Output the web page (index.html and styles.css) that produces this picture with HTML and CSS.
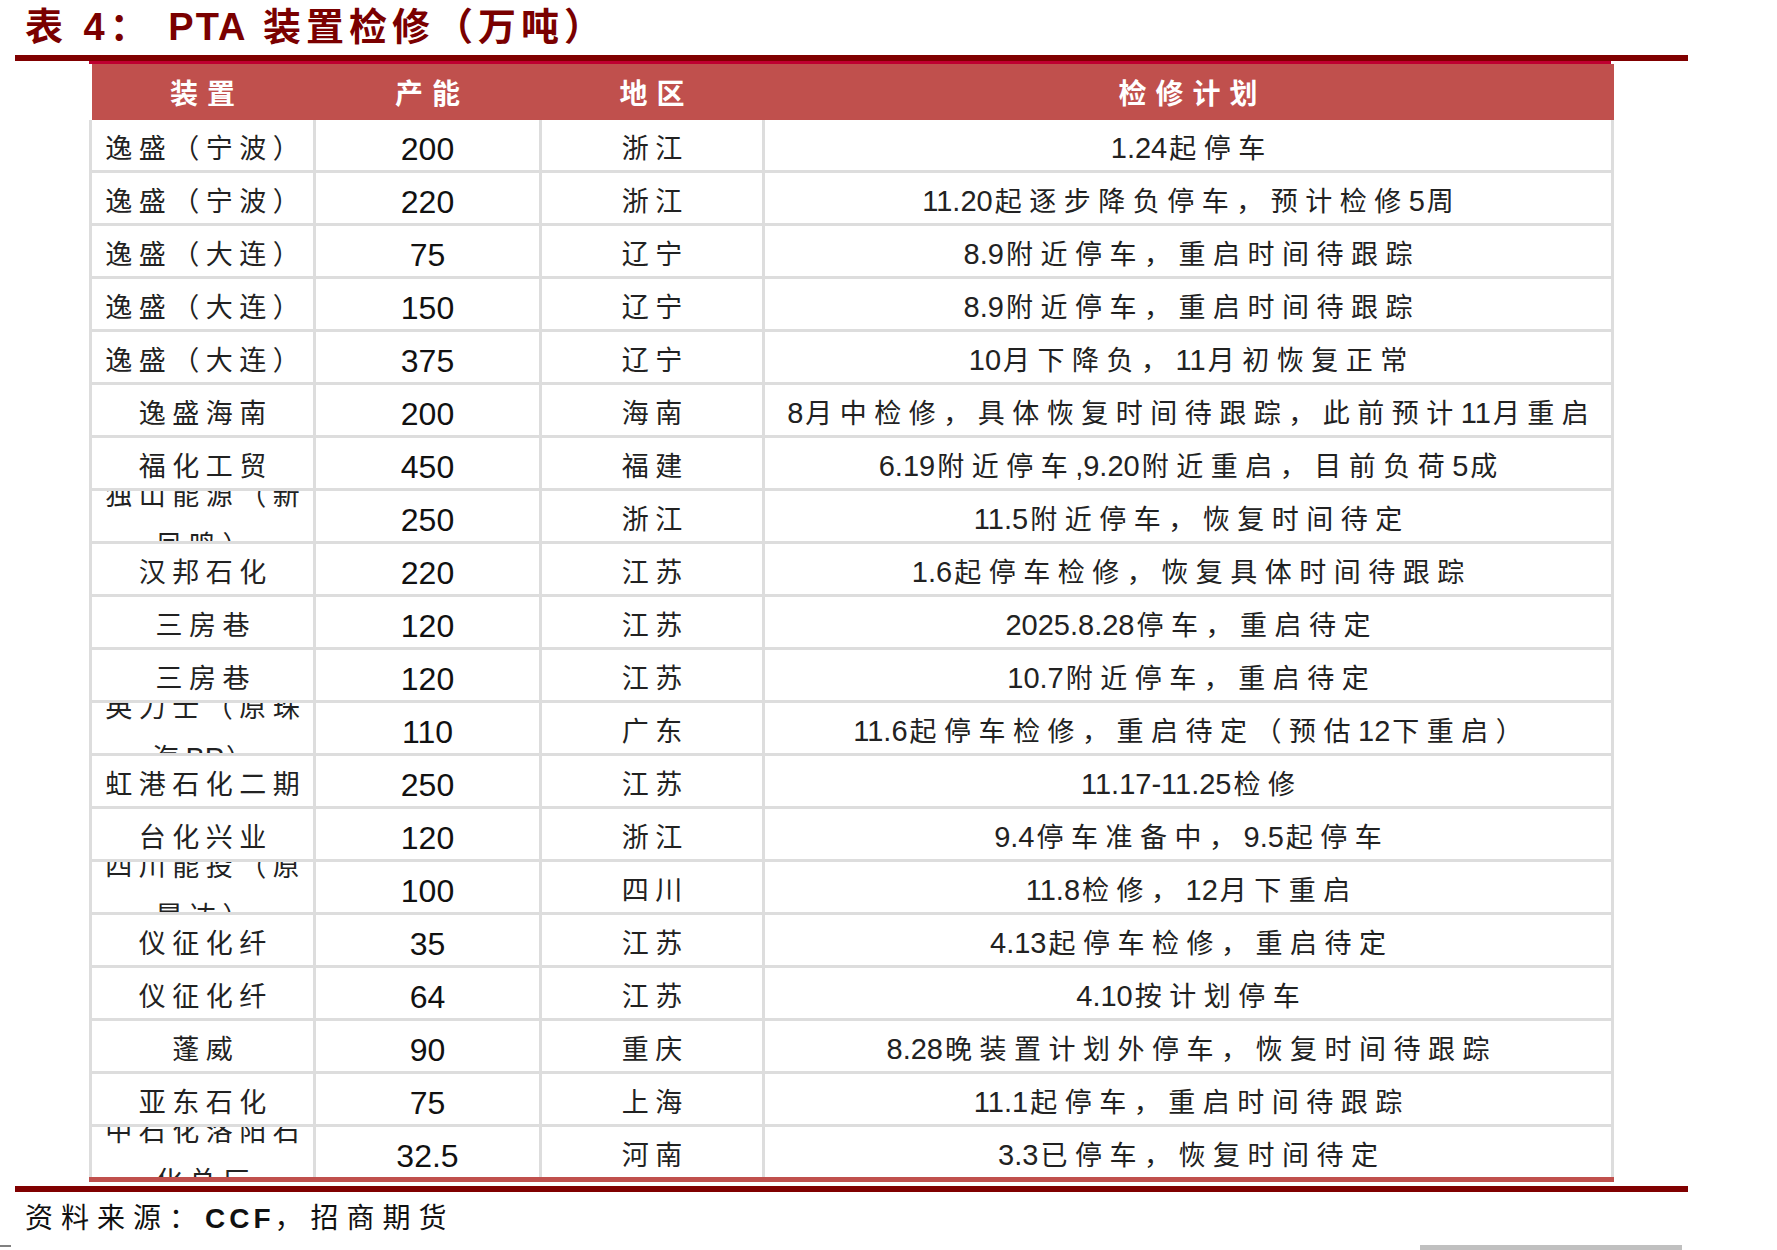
FILE: index.html
```html
<!DOCTYPE html>
<html lang="zh-CN">
<head>
<meta charset="utf-8">
<title>表4：PTA装置检修（万吨）</title>
<link rel="stylesheet" href="styles.css">
</head>
<body>
<div class="page">
  <h1 class="title"><span class="t-cjk">表</span> <span class="t-lat">4</span><span class="t-cjk">：</span> <span class="t-lat narrow">PTA</span> <span class="t-cjk">装置检修（万吨）</span></h1>
  <div class="rule"></div>

  <div class="tbl">
    <div class="topline"></div>
    <div class="head">
      <div class="hc">装置</div>
      <div class="hc">产能</div>
      <div class="hc">地区</div>
      <div class="hc">检修计划</div>
    </div>

    <div class="row"><div class="c"><span>逸盛（宁波）</span></div><div class="c num">200</div><div class="c"><span>浙江</span></div><div class="c plan"><span><span class="n">1.24</span>起停车</span></div></div>
    <div class="row"><div class="c"><span>逸盛（宁波）</span></div><div class="c num">220</div><div class="c"><span>浙江</span></div><div class="c plan"><span><span class="n">11.20</span>起逐步降负停车，预计检修<span class="n">5</span>周</span></div></div>
    <div class="row"><div class="c"><span>逸盛（大连）</span></div><div class="c num">75</div><div class="c"><span>辽宁</span></div><div class="c plan"><span><span class="n">8.9</span>附近停车，重启时间待跟踪</span></div></div>
    <div class="row"><div class="c"><span>逸盛（大连）</span></div><div class="c num">150</div><div class="c"><span>辽宁</span></div><div class="c plan"><span><span class="n">8.9</span>附近停车，重启时间待跟踪</span></div></div>
    <div class="row"><div class="c"><span>逸盛（大连）</span></div><div class="c num">375</div><div class="c"><span>辽宁</span></div><div class="c plan"><span><span class="n">10</span>月下降负，<span class="n">11</span>月初恢复正常</span></div></div>
    <div class="row"><div class="c"><span>逸盛海南</span></div><div class="c num">200</div><div class="c"><span>海南</span></div><div class="c plan"><span><span class="n">8</span>月中检修，具体恢复时间待跟踪，此前预计<span class="n">11</span>月重启</span></div></div>
    <div class="row"><div class="c"><span>福化工贸</span></div><div class="c num">450</div><div class="c"><span>福建</span></div><div class="c plan"><span><span class="n">6.19</span>附近停车<span class="n">,9.20</span>附近重启，目前负荷<span class="n">5</span>成</span></div></div>
    <div class="row"><div class="c"><span class="wrap">独山能源（新凤鸣）</span></div><div class="c num">250</div><div class="c"><span>浙江</span></div><div class="c plan"><span><span class="n">11.5</span>附近停车，恢复时间待定</span></div></div>
    <div class="row"><div class="c"><span>汉邦石化</span></div><div class="c num">220</div><div class="c"><span>江苏</span></div><div class="c plan"><span><span class="n">1.6</span>起停车检修，恢复具体时间待跟踪</span></div></div>
    <div class="row"><div class="c"><span>三房巷</span></div><div class="c num">120</div><div class="c"><span>江苏</span></div><div class="c plan"><span><span class="n">2025.8.28</span>停车，重启待定</span></div></div>
    <div class="row"><div class="c"><span>三房巷</span></div><div class="c num">120</div><div class="c"><span>江苏</span></div><div class="c plan"><span><span class="n">10.7</span>附近停车，重启待定</span></div></div>
    <div class="row"><div class="c"><span class="wrap">英力士（原珠海<span class="n">BP</span>）</span></div><div class="c num">110</div><div class="c"><span>广东</span></div><div class="c plan"><span><span class="n">11.6</span>起停车检修，重启待定（预估<span class="n">12</span>下重启）</span></div></div>
    <div class="row"><div class="c"><span>虹港石化二期</span></div><div class="c num">250</div><div class="c"><span>江苏</span></div><div class="c plan"><span><span class="n">11.17-11.25</span>检修</span></div></div>
    <div class="row"><div class="c"><span>台化兴业</span></div><div class="c num">120</div><div class="c"><span>浙江</span></div><div class="c plan"><span><span class="n">9.4</span>停车准备中，<span class="n">9.5</span>起停车</span></div></div>
    <div class="row"><div class="c"><span class="wrap">四川能投（原晟达）</span></div><div class="c num">100</div><div class="c"><span>四川</span></div><div class="c plan"><span><span class="n">11.8</span>检修，<span class="n">12</span>月下重启</span></div></div>
    <div class="row"><div class="c"><span>仪征化纤</span></div><div class="c num">35</div><div class="c"><span>江苏</span></div><div class="c plan"><span><span class="n">4.13</span>起停车检修，重启待定</span></div></div>
    <div class="row"><div class="c"><span>仪征化纤</span></div><div class="c num">64</div><div class="c"><span>江苏</span></div><div class="c plan"><span><span class="n">4.10</span>按计划停车</span></div></div>
    <div class="row"><div class="c"><span>蓬威</span></div><div class="c num">90</div><div class="c"><span>重庆</span></div><div class="c plan"><span><span class="n">8.28</span>晚装置计划外停车，恢复时间待跟踪</span></div></div>
    <div class="row"><div class="c"><span>亚东石化</span></div><div class="c num">75</div><div class="c"><span>上海</span></div><div class="c plan"><span><span class="n">11.1</span>起停车，重启时间待跟踪</span></div></div>
    <div class="row last"><div class="c"><span class="wrap">中石化洛阳石化总厂</span></div><div class="c num">32.5</div><div class="c"><span>河南</span></div><div class="c plan"><span><span class="n">3.3</span>已停车，恢复时间待定</span></div></div>

    <div class="bottomline"></div>
  </div>

  <div class="rule rule-bottom"></div>
  <p class="source">资料来源：<span class="src-lat">CCF</span>，招商期货</p>
  <div class="footer">
    <div class="mark"></div>
    <div class="bar"></div>
  </div>
</div>
</body>
</html>
```

FILE: styles.css
```css
html, body {
  margin: 0;
  padding: 0;
  background: #ffffff;
}

.page {
  width: 1777px;
  height: 1250px;
  overflow: hidden;
  font-family: "Liberation Sans", "Noto Sans CJK SC", sans-serif;
  color: #222222;
}

.title {
  margin: 0;
  height: 55px;
  padding-left: 25px;
  font-size: 38px;
  line-height: 55px;
  font-weight: 700;
  color: #7a0000;
  letter-spacing: 5px;
  white-space: pre;
  font-family: "Liberation Sans", "Noto Sans CJK SC", sans-serif;
}

.title .narrow {
  font-family: "Liberation Sans Narrow", "Liberation Sans", sans-serif;
  letter-spacing: 2px;
}

.rule {
  margin-left: 15px;
  width: 1673px;
  height: 6px;
  background: #800000;
}

.rule-bottom {
  margin-top: 4px;
}

.tbl {
  margin-left: 89px;
  width: 1525px;
}

.topline {
  width: 1522px;
  height: 3px;
  background: #bf0030;
}

.head {
  margin-left: 3px;
  width: 1522px;
  height: 56px;
  background: #c0504d;
  display: grid;
  grid-template-columns: 221px 223px 220px 846px;
  column-gap: 3px;
  padding-right: 3px;
  box-sizing: border-box;
  align-items: center;
}

.hc {
  text-align: center;
  color: #ffffff;
  font-family: "Noto Sans CJK SC", sans-serif;
  font-weight: 700;
  font-size: 28px;
  letter-spacing: 9px;
  padding-left: 9px;
  line-height: 56px;
}

.row {
  display: grid;
  grid-template-columns: 221px 223px 220px 846px;
  column-gap: 3px;
  padding: 0 3px;
  background: #dddddd;
  border-bottom: 3px solid #dddddd;
}

.row.last {
  border-bottom: 0;
}

.c {
  height: 50px;
  background: #ffffff;
  display: flex;
  align-items: center;
  justify-content: center;
  text-align: center;
  overflow: hidden;
  font-size: 27px;
  line-height: 50px;
  letter-spacing: 6.5px;
  padding-left: 6.5px;
  padding-top: 7px;
  box-sizing: border-box;
  color: #222222;
}

.c.plan {
  letter-spacing: 7.5px;
  padding-left: 7.5px;
}

.c .n {
  font-size: 29px;
  letter-spacing: 0;
  margin-right: 2px;
}

.c .wrap {
  line-height: 50px;
  margin-top: 3px;
}

.c.num {
  font-size: 32px;
  letter-spacing: 0;
  padding-left: 0;
  color: #111111;
}

.bottomline {
  height: 5px;
  background: #c0504d;
}

.source {
  margin: 0;
  height: 52px;
  padding-left: 25px;
  font-size: 28px;
  line-height: 54px;
  letter-spacing: 8px;
  color: #111111;
}

.src-lat {
  font-family: "Liberation Sans Narrow", "Liberation Sans", sans-serif;
  font-weight: 700;
  letter-spacing: 4px;
}

.footer {
  margin-top: 1px;
  height: 5px;
  display: flex;
  justify-content: space-between;
  align-items: flex-start;
  padding-right: 95px;
}

.mark {
  width: 11px;
  height: 2px;
  background: #808080;
}

.bar {
  width: 262px;
  height: 5px;
  background: #c0c0c0;
}
```
